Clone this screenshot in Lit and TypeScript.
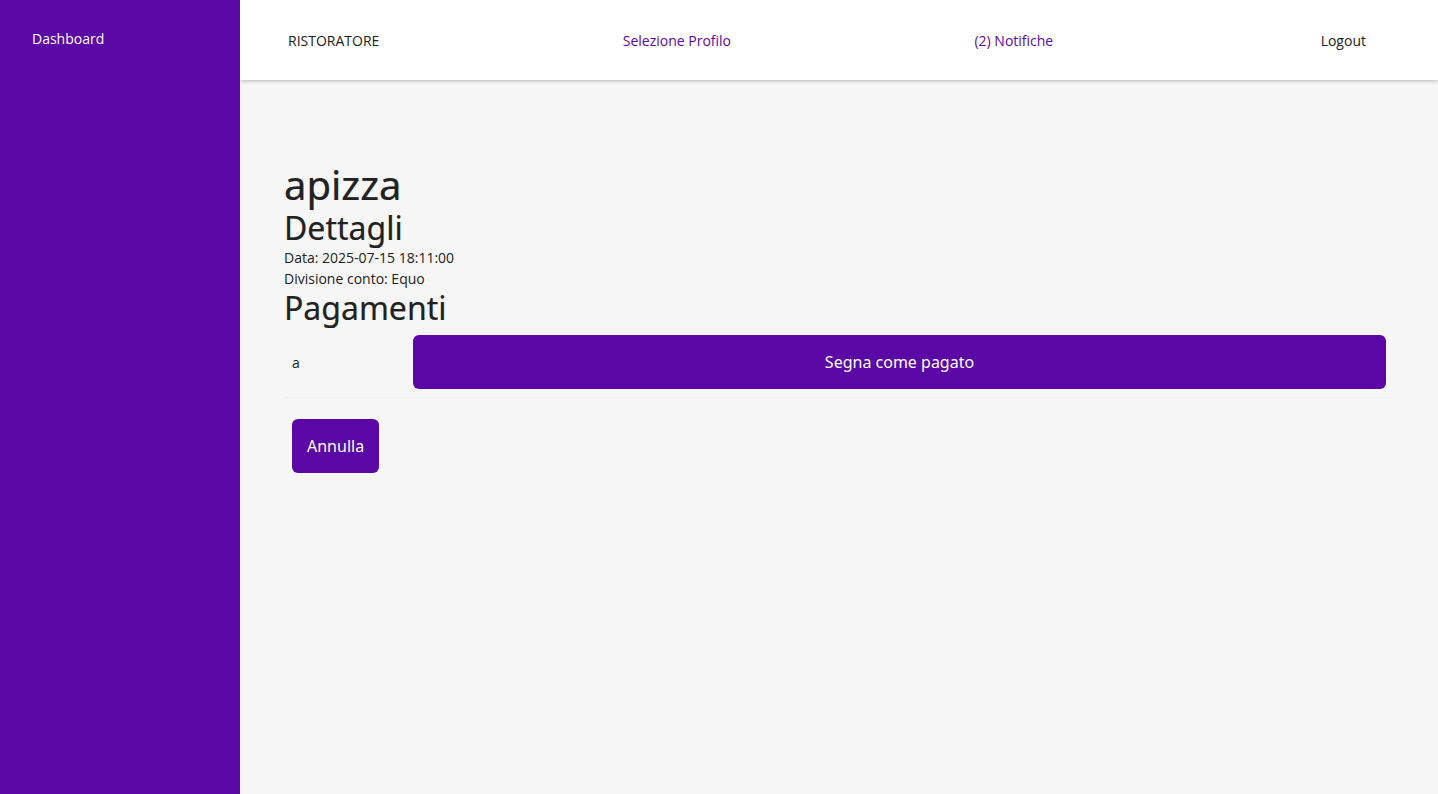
import { LitElement, html, css } from "lit";
import { customElement, state } from "lit/decorators.js";

interface Payment {
  name: string;
  paid: boolean;
}

@customElement("app-root")
export class AppRoot extends LitElement {
  static styles = css`
    :host {
      display: flex;
      min-height: 100vh;
      background: #f6f6f6;
      color: #212121;
      font-family: "Open Sans", sans-serif;
      font-size: 14px;
      line-height: 21px;
    }
    * {
      box-sizing: border-box;
    }
    a {
      color: #5b07a5;
      text-decoration: none;
    }
    .sidebar {
      position: relative;
      z-index: 1;
      flex: 0 0 240px;
      padding: 28px 32px;
      background: #5b07a5;
    }
    .sidebar a {
      color: #fff;
    }
    .page {
      flex: 1;
      min-width: 0;
    }
    .topbar {
      display: flex;
      align-items: center;
      justify-content: space-between;
      height: 80px;
      padding: 0 48px;
      background: #fff;
      box-shadow: 0 1px 4px rgba(0, 0, 0, 0.25);
    }
    .topbar .plain {
      padding: 0 24px;
      color: #212121;
    }
    main {
      padding: 80px 44px;
    }
    h1,
    h2,
    p {
      margin: 0;
    }
    h1,
    h2 {
      font-family: "Noto Sans", "Open Sans", sans-serif;
      font-weight: 400;
      -webkit-text-stroke: 0.006em currentColor;
    }
    h1 {
      font-size: 40px;
      line-height: 49px;
    }
    h2 {
      font-size: 32px;
      line-height: 38px;
    }
    table {
      width: 100%;
      border-spacing: 0;
    }
    td {
      padding: 8px;
      border-bottom: 1px solid #efefef;
    }
    .name {
      width: 121px;
    }
    button {
      height: 54px;
      padding: 0 15px;
      border: 0;
      border-radius: 6px;
      background: #5b07a5;
      color: #fff;
      font: 16px/24px "Noto Sans", "Open Sans", sans-serif;
      cursor: pointer;
    }
    td button {
      display: block;
      width: 100%;
    }
    .actions {
      padding: 21px 8px;
    }
  `;

  @state() private payments: Payment[] = [{ name: "a", paid: false }];

  private markPaid(payment: Payment) {
    this.payments = this.payments.map((p) =>
      p === payment ? { ...p, paid: true } : p
    );
  }

  render() {
    return html`
      <nav class="sidebar"><a href="#dashboard">Dashboard</a></nav>
      <div class="page">
        <header class="topbar">
          <span>RISTORATORE</span>
          <a href="#profilo">Selezione Profilo</a>
          <a href="#notifiche">(2) Notifiche</a>
          <a class="plain" href="#logout">Logout</a>
        </header>
        <main>
          <h1>apizza</h1>
          <h2>Dettagli</h2>
          <p>Data: 2025-07-15 18:11:00</p>
          <p>Divisione conto: Equo</p>
          <h2>Pagamenti</h2>
          <table>
            <tbody>
              ${this.payments.map(
                (p) => html`<tr>
                  <td class="name">${p.name}</td>
                  <td>
                    <button ?disabled=${p.paid} @click=${() => this.markPaid(p)}>
                      Segna come pagato
                    </button>
                  </td>
                </tr>`
              )}
            </tbody>
          </table>
          <div class="actions"><button type="button">Annulla</button></div>
        </main>
      </div>
    `;
  }
}
